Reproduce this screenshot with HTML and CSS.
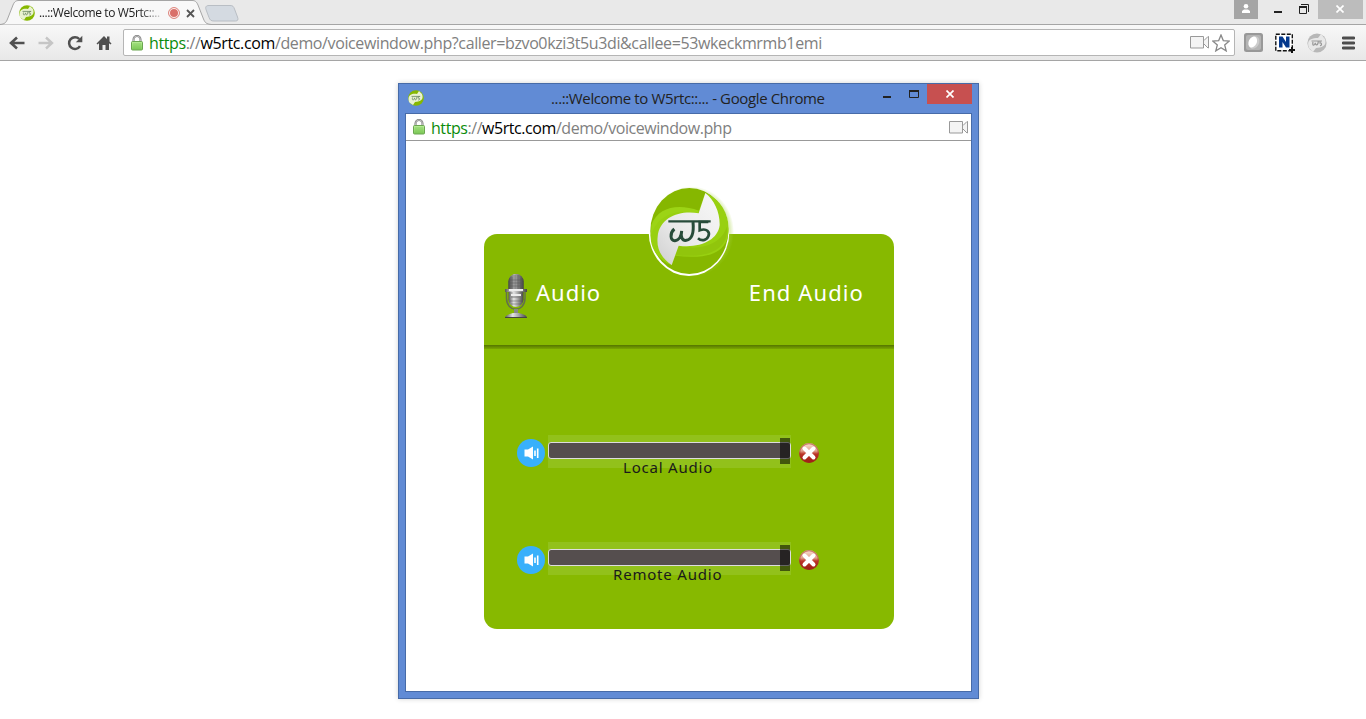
FILE: index.html
```html
<!DOCTYPE html>
<html lang="en">
<head>
<meta charset="utf-8">
<title>...::Welcome to W5rtc::...</title>
<link rel="stylesheet" href="styles.css">
</head>
<body>
<svg class="defs" width="0" height="0" aria-hidden="true">
  <defs>
    <linearGradient id="silver" x1="0" x2="1"><stop offset="0" stop-color="#555"/><stop offset=".35" stop-color="#e4e4e4"/><stop offset=".6" stop-color="#aaa"/><stop offset="1" stop-color="#444"/></linearGradient>
    <linearGradient id="silverTop" x1="0" x2="1"><stop offset="0" stop-color="#444"/><stop offset=".4" stop-color="#aaa"/><stop offset="1" stop-color="#444"/></linearGradient>
    <linearGradient id="lockFill" x1="0" x2="0" y1="0" y2="1"><stop offset="0" stop-color="#b9ee98"/><stop offset="1" stop-color="#7cc957"/></linearGradient>
    <linearGradient id="redFill" x1="0" x2="0" y1="0" y2="1"><stop offset="0" stop-color="#fbe3d6"/><stop offset=".4" stop-color="#e0a08c"/><stop offset=".55" stop-color="#bd3528"/><stop offset="1" stop-color="#991a12"/></linearGradient>
    <linearGradient id="leaf" x1="0" x2="1" y1="1" y2="0"><stop offset="0" stop-color="#cfcfcf"/><stop offset=".4" stop-color="#e9e9e9"/><stop offset="1" stop-color="#f8f8f8"/></linearGradient>
    <radialGradient id="halo"><stop offset=".88" stop-color="#a5d141" stop-opacity=".45"/><stop offset="1" stop-color="#a5d141" stop-opacity="0"/></radialGradient>
    <symbol id="favicon" viewBox="0 0 16 16">
      <circle cx="8" cy="8" r="7.8" fill="#86b800"/>
      <path d="M1 12C-1 5 4 3 9 4L11 1l3 3c2 5-1 8-7 8l-2 3-3-2z" fill="#e9f2d0"/>
      <path d="M3.500 6.400h8.700M4.600 7.500c-1 3.200 1.400 3.200 2 .4 0 2.900 2.400 2.600 2.300-1.300M12 6.500h-1.800v1.600c2-.4 2 2.100 0 1.900" fill="none" stroke="#75906b" stroke-width=".9"/>
    </symbol>
    <symbol id="lock" viewBox="0 0 12 16">
      <path d="M2.500 7V4.500a3.500 3.500 0 0 1 7 0V7" fill="none" stroke="#777" stroke-width="2"/>
      <path d="M2.500 7V4.500a3.500 3.500 0 0 1 7 0V7" fill="none" stroke="#ddd" stroke-width=".7"/>
      <rect x=".5" y="6.500" width="11" height="8.500" rx="1" fill="url(#lockFill)" stroke="#6ba551"/>
      <path d="M2 9h8M2 11h8M2 13h8" stroke="#78c253" stroke-width=".6"/>
    </symbol>
    <symbol id="camera" viewBox="0 0 20 13">
      <path d="M.5.5h13v11.500H.5z" fill="#f4f4f4" stroke="#999"/>
      <path d="M14 4.500l4-4h.5v11.500h-.5L14 8" fill="#f4f4f4" stroke="#999"/>
    </symbol>
    <symbol id="speaker" viewBox="0 0 28 28">
      <circle cx="14" cy="14" r="14" fill="#38b0fb"/>
      <path d="M7.500 10.500h3.500l5-3v13l-5-3H7.500z" fill="#fff"/>
      <path d="M18 11.500v5.500M20.700 9.500v9.500" stroke="#fff" stroke-width="1.600"/>
    </symbol>
    <symbol id="cancel" viewBox="0 0 20 20">
      <circle cx="10" cy="10" r="9.900" fill="url(#redFill)"/>
      <circle cx="10" cy="10" r="9.300" fill="none" stroke="#a83022" stroke-opacity=".55" stroke-width="1.200"/>
      <path d="M5.500 5.500l9 9M14.500 5.500l-9 9" stroke="#fff" stroke-width="4" stroke-linecap="round"/>
    </symbol>
  </defs>
</svg>

<header class="tabstrip">
  <div class="tab">
    <svg class="tab-shape" width="240" height="25" viewBox="0 0 240 25">
      <path d="M0 24.500C5 24 6 22.500 7.500 19L13 5C14.500 1.500 16 .5 19 .5H192c3 0 4.500 1 6 4.500l5.500 14c1.500 3.500 2.500 5 8 5.500" fill="#f8f8f8" stroke="#a5a5a5"/>
      <path d="M209 5.500h21c3 0 3.500 1 4.500 3.500l3 8c1 2.500.5 4-2 4H214c-3 0-4-1-5-3.500l-3-8c-.8-2.500 0-4 3-4z" fill="#d4dae1" stroke="#b9bec4"/>
    </svg>
    <svg class="tab-icon" width="16" height="16"><use href="#favicon"/></svg>
    <span class="tab-title">...::Welcome to W5rtc::..</span>
    <svg class="tab-rec" width="12" height="12" viewBox="0 0 12 12"><circle cx="6" cy="6" r="5.400" fill="#fff" stroke="#d9786f"/><circle cx="6" cy="6" r="4" fill="#d9706a"/></svg>
    <svg class="tab-close" width="9" height="9" viewBox="0 0 9 9"><path d="M1 1l7 7M8 1L1 8" stroke="#555" stroke-width="1.800"/></svg>
  </div>
  <div class="window-buttons">
    <div class="user"><svg width="10" height="10" viewBox="0 0 10 10"><circle cx="5" cy="2.300" r="2.300" fill="#fff"/><path d="M1 9V7l2-1.500h4L9 7v2z" fill="#fff"/></svg></div>
    <svg class="minimize" width="8" height="2"><path d="M0 1h8" stroke="#222" stroke-width="2"/></svg>
    <svg class="restore" width="10" height="10" viewBox="0 0 10 10"><path d="M2 .5h7.500V8M.5 3h7v6.500h-7z" fill="none" stroke="#222"/><path d="M0 3h8" stroke="#222" stroke-width="2"/></svg>
    <div class="close"><svg width="8" height="8" viewBox="0 0 8 8"><path d="M.5.5l7 7M7.500.5l-7 7" stroke="#fff" stroke-width="1.700"/></svg></div>
  </div>
</header>

<nav class="toolbar">
  <div class="nav-buttons">
    <svg width="16" height="14" viewBox="0 0 16 14"><path d="M15.500 7H3M8 1.500L2 7l6 5.500" fill="none" stroke="#505050" stroke-width="2.600"/></svg>
    <svg width="16" height="14" viewBox="0 0 16 14"><path d="M.5 7H13M8 1.500L14 7l-6 5.500" fill="none" stroke="#c5c5c5" stroke-width="2.400"/></svg>
    <svg width="16" height="16" viewBox="0 0 16 16"><path d="M13 11.200A5.900 5.900 0 1 1 12.300 4" fill="none" stroke="#505050" stroke-width="2.500"/><path d="M15.300.8v6.500H8.800z" fill="#505050"/></svg>
    <svg width="16" height="16" viewBox="0 0 16 16"><path d="M.5 8.500L8 1l3 3V1.500h2.500v5L15.500 8.500l-1 1L13 8.200V15H9.500v-5h-3v5H3V8.200L1.500 9.500z" fill="#505050"/></svg>
  </div>
  <div class="omnibox">
    <svg width="12" height="16"><use href="#lock"/></svg>
    <span class="url url-main"><span class="scheme">https</span>://<b>w5rtc.com</b>/demo/voicewindow.php?caller=bzvo0kzi3t5u3di&amp;callee=53wkeckmrmb1emi</span>
    <svg width="20" height="13"><use href="#camera"/></svg>
    <svg class="star" width="18" height="18" viewBox="0 0 18 18"><path d="M9 1l2.300 5.600 6 .5-4.600 3.900 1.500 5.900L9 13.700l-5.200 3.200 1.500-5.900L.7 7.100l6-.5z" fill="#fff" stroke="#888" stroke-width="1.300"/></svg>
  </div>
  <div class="extensions">
    <svg width="19" height="19" viewBox="0 0 19 19"><rect width="19" height="19" rx="2.500" fill="#989898"/><rect x="2" y="2" width="15" height="15" rx="2" fill="#b4b4b4"/><ellipse cx="10" cy="9.500" rx="5" ry="6.500" transform="rotate(30 10 9.500)" fill="#ccc"/><ellipse cx="8.700" cy="9" rx="4" ry="5.700" transform="rotate(25 8.700 9)" fill="#fff"/></svg>
    <svg width="20" height="20" viewBox="0 0 20 20"><rect x=".8" y="1.200" width="16.500" height="16.500" fill="#fff" stroke="#111" stroke-width="1.400" stroke-dasharray="4 1.500"/><path d="M4 14.500v-11h3.500l3.500 5.500V3.500h3.500v11H11L7.500 9v5.500z" fill="#05398d"/><path d="M17 14v6M14 17h6" stroke="#111" stroke-width="2"/></svg>
    <svg width="20" height="20" viewBox="0 0 20 20"><circle cx="10" cy="10" r="9.600" fill="#b8b8b8"/><path d="M2 15C-1 7 4 5 11 5l3-4 4 5c2 6-2 9-9 9l-3 4-4-4z" fill="#e8e8e8"/><path d="M4.500 8H15M6 9c-1 4 1.500 4 2.300.8 0 3 3 3 3-1.800M15 8h-2v2c2-.4 2 3 0 2.500" fill="none" stroke="#999" stroke-width="1.200"/></svg>
    <svg class="menu" width="13" height="14" viewBox="0 0 13 14"><path d="M1 2h11M1 7h11M1 12h11" stroke="#4d4d4d" stroke-width="2.800" stroke-linecap="round"/></svg>
  </div>
</nav>

<main class="popup">
  <div class="titlebar">
    <svg class="popup-icon" width="16" height="16"><use href="#favicon"/></svg>
    <span class="popup-title">...::Welcome to W5rtc::... - Google Chrome</span>
    <svg class="popup-min" width="8" height="2"><path d="M0 1h8" stroke="#222" stroke-width="2"/></svg>
    <svg class="popup-max" width="10" height="8" viewBox="0 0 10 8"><path d="M.5.500h9v7h-9z" fill="none" stroke="#222"/><path d="M0 1h10" stroke="#222" stroke-width="2"/></svg>
    <div class="popup-close"><svg width="8" height="8" viewBox="0 0 8 8"><path d="M.5.5l7 7M7.500.5l-7 7" stroke="#fff" stroke-width="1.700"/></svg></div>
  </div>
  <div class="popup-body">
    <div class="addressbar">
      <svg width="12" height="16"><use href="#lock"/></svg>
      <span class="url url-popup"><span class="scheme">https</span>://<b>w5rtc.com</b>/demo/voicewindow.php</span>
      <svg width="20" height="13"><use href="#camera"/></svg>
    </div>
    <section class="card">
      <svg class="logo" width="120" height="110" viewBox="0 0 360 330">
        <ellipse cx="184" cy="170" rx="128" ry="136" fill="url(#halo)"/>
        <ellipse cx="177" cy="171" rx="121" ry="132" fill="#fff"/>
        <ellipse cx="178" cy="168" rx="117" ry="129" fill="#86b700"/>
        <path d="M62 185C66 130 120 90 205 112L226 53C290 80 310 155 287 203C262 247 200 250 136 242L125 271C84 255 62 220 62 185z" fill="#98d010"/>
        <path d="M146 213C215 227 276 206 290 155C299 222 235 252 136 240z" fill="#91c50c"/>
        <path d="M64 150C85 95 145 85 207 107L203 115C135 100 80 122 62 185z" fill="#9cd415"/>
        <path d="M226 54C253 75 270 112 269 151C263 196 211 220 146 212L125 270C92 247 79 220 83 185C89 126 150 105 206 115z" fill="url(#leaf)"/>
        <g fill="none" stroke="#274b3a">
          <path d="M115 139h127" stroke-width="7"/>
          <path d="M133 162C119 174 120 198 135 197C147 196 154 182 155 168C151 187 157 198 169 196C186 193 192 172 189 141" stroke-width="9"/>
          <path d="M235 141H209V166C230 158 241 171 235 184C230 197 214 199 204 190" stroke-width="8"/>
        </g>
      </svg>
      <div class="card-head">
        <svg class="mic" width="24" height="46" viewBox="0 0 24 46">
          <path d="M2.500 19v6c0 15 18.500 15 18.500 0v-6" fill="none" stroke="#63714a" stroke-width="1.500"/>
          <path d="M10 36h4v5h-4z" fill="#888"/>
          <rect x="4.500" y="1" width="15" height="33" rx="7.500" fill="url(#silver)"/>
          <path d="M4.500 16V8.500a7.500 7.500 0 0 1 15 0V16z" fill="url(#silverTop)"/>
          <path d="M8 4v12M11 2v14M14 2v14M17 5v11M5 7h14M5 10h14M5 13h14M6 28h12M7 31h10" stroke="#555" stroke-width=".5"/>
          <path d="M1 16h22v3H1z" fill="url(#silver)"/><path d="M5 17h14M7 22h10" stroke="#eee" stroke-width="2"/><path d="M7 24h10" stroke="#777"/>
          <path d="M1 45c0-3 5-4 8-5h6c3 1 8 2 8 5z" fill="url(#silver)"/><path d="M1 44.500h22" stroke="#444"/>
        </svg>
        <span class="label-audio">Audio</span>
        <span class="label-end">End Audio</span>
      </div>
      <div class="channels">
        <div class="channel">
          <svg class="speaker" width="28" height="28"><use href="#speaker"/></svg>
          <div class="slider"><div class="track"></div><div class="handle"></div><span class="caption local">Local Audio</span></div>
          <svg class="cancel" width="20" height="20"><use href="#cancel"/></svg>
        </div>
        <div class="channel">
          <svg class="speaker" width="28" height="28"><use href="#speaker"/></svg>
          <div class="slider"><div class="track"></div><div class="handle"></div><span class="caption remote">Remote Audio</span></div>
          <svg class="cancel" width="20" height="20"><use href="#cancel"/></svg>
        </div>
      </div>
    </section>
  </div>
</main>
</body>
</html>
```

FILE: styles.css
```css
* { box-sizing: border-box; }
html, body { margin: 0; height: 719px; overflow: hidden; }
body { background: #fff; font-family: "Noto Sans", "Open Sans", sans-serif; }
svg { display: block; flex: none; }
.defs { position: absolute; }
span { white-space: nowrap; }

.tabstrip { display: flex; justify-content: space-between; height: 24px; background: #e9e9e9; }
.tab { position: relative; display: flex; align-items: flex-start; width: 240px; padding-left: 19px; }
.tab-shape { position: absolute; left: 0; top: 0; z-index: 1; }
.tab-icon, .tab-title, .tab-rec, .tab-close { position: relative; z-index: 2; }
.tab-icon { margin-top: 5px; }
.tab-title { flex: none; width: 126px; margin: 4px 0 0 4px; font: 12px/18px "Open Sans", sans-serif; letter-spacing: -.4px; color: #222; -webkit-mask-image: linear-gradient(90deg, #000 80%, transparent); mask-image: linear-gradient(90deg, #000 80%, transparent); }
.tab-rec { margin: 7px 0 0 3px; }
.tab-close { margin: 9px 0 0 6px; }
.window-buttons { display: flex; align-items: flex-start; }
.user { width: 24px; height: 19px; margin-right: 16px; padding: 4px 7px; background: #a5a5a5; }
.minimize { margin: 11px 0 0; }
.restore { margin: 4px 0 0 17px; }
.close { width: 45px; height: 19px; margin: 0 3px 0 9px; padding: 5px 18px; background: #bcbcbc; }

.toolbar { display: flex; align-items: center; height: 37px; padding: 0 9px; background: linear-gradient(#f8f8f8, #e8e8e8); border-top: 1px solid #a5a5a5; border-bottom: 1px solid #a5a5a5; }
.nav-buttons { display: flex; align-items: center; gap: 13px; }
.omnibox { display: flex; flex: none; align-items: center; width: 1112px; height: 27px; margin-left: 11px; padding: 0 4px 0 7px; background: #fff; border: 1px solid #b5b5b5; border-radius: 2px; }
.url { flex: 1; margin-left: 6px; font: 16px/24px "Open Sans", sans-serif; color: #808080; }
.url b { font-weight: 400; color: #000; }
.url-main { letter-spacing: -.38px; }
.url-popup { margin-top: 1px; letter-spacing: -.44px; }
.scheme { color: #0b8c0b; }
.star { margin-left: 2px; }
.extensions { display: flex; align-items: center; gap: 13px; margin-left: 9px; }
.extensions svg + svg { margin-left: -1px; }
.extensions .menu { margin-left: 2px; }

.popup { width: 581px; height: 616px; margin: 22px 0 0 398px; padding: 0 6px 6px; background: #618bd5; border: 1px solid #476ba8; box-shadow: 0 0 5px rgba(0, 0, 0, .18); }
.titlebar { display: flex; align-items: flex-start; height: 29px; }
.popup-icon { margin: 6px 0 0 3px; }
.popup-title { flex: none; width: 275px; margin: 3px 0 0 127px; font: 15px/22px "Open Sans", sans-serif; letter-spacing: -.37px; color: #222; }
.popup-min { margin: 12px 0 0 57px; }
.popup-max { margin: 6px 0 0 18px; }
.popup-close { width: 45px; height: 20px; margin-left: 8px; padding: 6px 19px; background: #c75050; }
.popup-body { height: 579px; background: #fff; border: 1px solid #476ba8; }
.addressbar { display: flex; align-items: center; height: 27px; padding: 0 2px 0 7px; border-bottom: 1px solid #999; }

.card { position: relative; width: 410px; height: 395px; margin: 93px 0 0 78px; background: #87b900; border-radius: 13px; color: #fff; }
.logo { position: absolute; left: 146px; top: -59px; }
.card-head { display: flex; align-items: flex-start; height: 115px; padding: 39px 30px 0 20px; background: linear-gradient(#557500, #7aa600) bottom / 100% 4px no-repeat; }
.label-audio, .label-end { margin-top: 4px; font-size: 22px; line-height: 30px; letter-spacing: 1px; }
.label-audio { margin-left: 8px; }
.label-end { margin-left: auto; letter-spacing: 1.1px; }
.channels { display: flex; flex-direction: column; gap: 74px; padding: 86px 0 0 33px; }
.channel { display: flex; height: 33px; align-items: flex-start; }
.speaker { margin-top: 4px; }
.slider { display: grid; width: 243px; height: 33px; margin-left: 3px; background: #92c11b; }
.track, .handle, .caption { grid-area: 1 / 1; }
.track { height: 17px; margin-top: 7px; background: #554e4e; border: 1px solid #ddd; border-radius: 3px; }
.handle { justify-self: end; width: 10px; height: 26px; margin: 3px 1px 0 0; background: rgba(0, 0, 0, .55); }
.caption { margin-top: 22px; font-size: 15px; line-height: 20px; letter-spacing: .8px; color: #1a1a1a; }
.local { margin-left: 75px; }
.remote { margin-left: 65px; }
.cancel { margin: 8px 0 0 8px; }
```
